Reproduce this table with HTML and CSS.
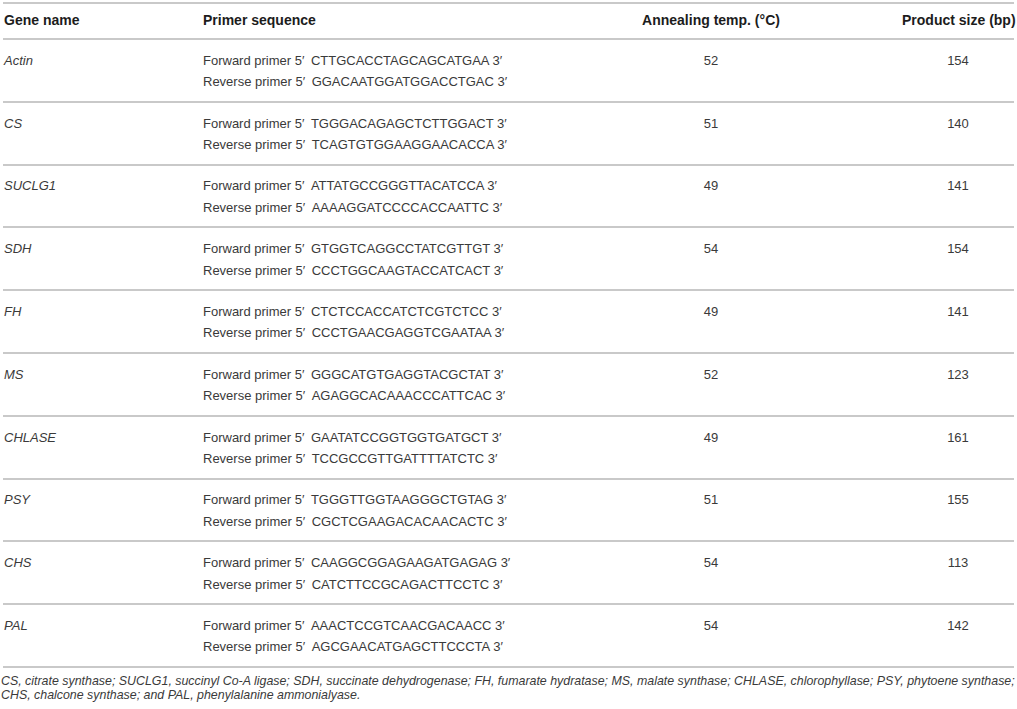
FILE: index.html
```html
<!DOCTYPE html>
<html>
<head>
<meta charset="utf-8">
<link rel="stylesheet" href="styles.css">
</head>
<body>
<div class="wrap">
<table class="primers">
<thead>
<tr>
<th class="c-gene">Gene name</th>
<th class="c-primer">Primer sequence</th>
<th class="c-temp">Annealing temp. (°C)</th>
<th class="c-size">Product size (bp)</th>
</tr>
</thead>
<tbody>
<tr><td class="c-gene"><i>Actin</i></td><td class="c-primer">Forward primer 5′&ensp;CTTGCACCTAGCAGCATGAA 3′<br>Reverse primer 5′&ensp;GGACAATGGATGGACCTGAC 3′</td><td class="c-temp">52</td><td class="c-size">154</td></tr>
<tr><td class="c-gene"><i>CS</i></td><td class="c-primer">Forward primer 5′&ensp;TGGGACAGAGCTCTTGGACT 3′<br>Reverse primer 5′&ensp;TCAGTGTGGAAGGAACACCA 3′</td><td class="c-temp">51</td><td class="c-size">140</td></tr>
<tr><td class="c-gene"><i>SUCLG1</i></td><td class="c-primer">Forward primer 5′&ensp;ATTATGCCGGGTTACATCCA 3′<br>Reverse primer 5′&ensp;AAAAGGATCCCCACCAATTC 3′</td><td class="c-temp">49</td><td class="c-size">141</td></tr>
<tr><td class="c-gene"><i>SDH</i></td><td class="c-primer">Forward primer 5′&ensp;GTGGTCAGGCCTATCGTTGT 3′<br>Reverse primer 5′&ensp;CCCTGGCAAGTACCATCACT 3′</td><td class="c-temp">54</td><td class="c-size">154</td></tr>
<tr><td class="c-gene"><i>FH</i></td><td class="c-primer">Forward primer 5′&ensp;CTCTCCACCATCTCGTCTCC 3′<br>Reverse primer 5′&ensp;CCCTGAACGAGGTCGAATAA 3′</td><td class="c-temp">49</td><td class="c-size">141</td></tr>
<tr><td class="c-gene"><i>MS</i></td><td class="c-primer">Forward primer 5′&ensp;GGGCATGTGAGGTACGCTAT 3′<br>Reverse primer 5′&ensp;AGAGGCACAAACCCATTCAC 3′</td><td class="c-temp">52</td><td class="c-size">123</td></tr>
<tr><td class="c-gene"><i>CHLASE</i></td><td class="c-primer">Forward primer 5′&ensp;GAATATCCGGTGGTGATGCT 3′<br>Reverse primer 5′&ensp;TCCGCCGTTGATTTTATCTC 3′</td><td class="c-temp">49</td><td class="c-size">161</td></tr>
<tr><td class="c-gene"><i>PSY</i></td><td class="c-primer">Forward primer 5′&ensp;TGGGTTGGTAAGGGCTGTAG 3′<br>Reverse primer 5′&ensp;CGCTCGAAGACACAACACTC 3′</td><td class="c-temp">51</td><td class="c-size">155</td></tr>
<tr><td class="c-gene"><i>CHS</i></td><td class="c-primer">Forward primer 5′&ensp;CAAGGCGGAGAAGATGAGAG 3′<br>Reverse primer 5′&ensp;CATCTTCCGCAGACTTCCTC 3′</td><td class="c-temp">54</td><td class="c-size">113</td></tr>
<tr><td class="c-gene"><i>PAL</i></td><td class="c-primer">Forward primer 5′&ensp;AAACTCCGTCAACGACAACC 3′<br>Reverse primer 5′&ensp;AGCGAACATGAGCTTCCCTA 3′</td><td class="c-temp">54</td><td class="c-size">142</td></tr>
</tbody>
</table>
<p class="note"><i>CS</i>, citrate synthase; <i>SUCLG1</i>, succinyl Co-A ligase; <i>SDH</i>, succinate dehydrogenase; <i>FH</i>, fumarate hydratase; <i>MS</i>, malate synthase; <i>CHLASE</i>, chlorophyllase; <i>PSY</i>, phytoene synthase;<br><i>CHS</i>, chalcone synthase; and <i>PAL</i>, phenylalanine ammonialyase.</p>
</div>
</body>
</html>
```

FILE: styles.css
```css
html, body {
  margin: 0;
  padding: 0;
  background: #ffffff;
}

body {
  font-family: "Liberation Sans", Arial, Helvetica, sans-serif;
  color: #3a3a3a;
}

.wrap {
  padding: 2px 3px 0 3px;
  width: 1011px;
}

.primers {
  width: 1011px;
  border-collapse: collapse;
  table-layout: fixed;
}

.primers th {
  font-size: 14px;
  font-weight: bold;
  color: #1c1c1c;
  line-height: 16px;
  padding: 8px 0 10px 0;
  border-top: 2px solid #c9c9c9;
  border-bottom: 2px solid #c9c9c9;
  text-align: left;
  vertical-align: middle;
  white-space: nowrap;
}

.primers td {
  font-size: 13px;
  line-height: 21.5px;
  padding: 9.8px 0 8px 0;
  border-bottom: 2px solid #c9c9c9;
  vertical-align: top;
  text-align: left;
  white-space: nowrap;
}

.primers td i {
  font-style: italic;
}

.primers .c-gene {
  width: 199px;
  padding-left: 1px;
}

.primers .c-primer {
  width: 317px;
}

.primers .c-temp {
  width: 382px;
  text-align: center;
}

.primers .c-size {
  width: 112px;
  text-align: center;
}

.note {
  margin: 6px 0 0 -2px;
  font-size: 12.4px;
  line-height: 14px;
  font-style: italic;
  color: #3a3a3a;
  white-space: nowrap;
}
```
